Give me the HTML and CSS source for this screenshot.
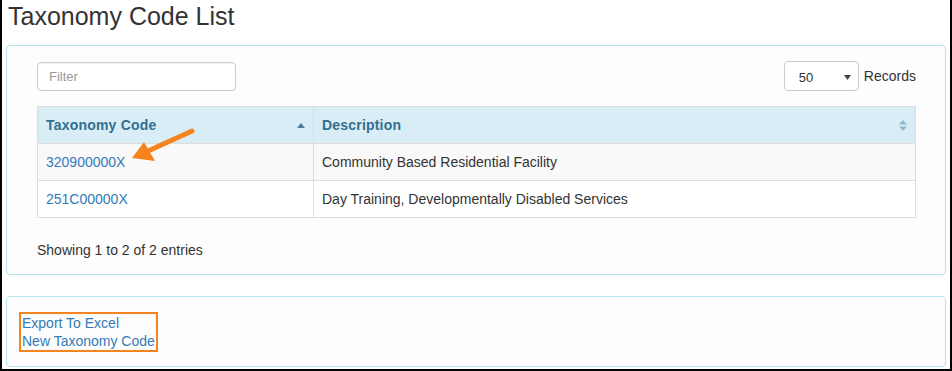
FILE: index.html
```html
<!DOCTYPE html>
<html lang="en">
<head>
  <meta charset="UTF-8" />
  <title>Taxonomy Code List</title>
  <link rel="stylesheet" href="styles.css">
</head>
<body>
  <div class="page">
    <h1>Taxonomy Code List</h1>

    <section class="panel">
      <div class="toolbar">
        <input class="filter" type="text" placeholder="Filter" />
        <div class="records">
          <div class="select">
            <span>50</span>
            <svg class="caret" width="7" height="5" viewBox="0 0 7 5"><path d="M0 0H7L3.5 5Z" fill="#444"/></svg>
          </div>
          <span>Records</span>
        </div>
      </div>

      <table class="grid">
        <thead>
          <tr>
            <th class="col-code">
              <div class="th-inner">Taxonomy Code
                <svg width="8" height="5" viewBox="0 0 8 5"><path d="M0 5L4 0L8 5Z" fill="#4f7d9b"/></svg>
              </div>
            </th>
            <th>
              <div class="th-inner">Description
                <svg width="8" height="11" viewBox="0 0 8 11"><path d="M0 4.5L4 0L8 4.5Z M0 6.5H8L4 11Z" fill="#93b6cc"/></svg>
              </div>
            </th>
          </tr>
        </thead>
        <tbody>
          <tr class="odd">
            <td><a href="#">320900000X</a></td>
            <td>Community Based Residential Facility</td>
          </tr>
          <tr>
            <td><a href="#">251C00000X</a></td>
            <td>Day Training, Developmentally Disabled Services</td>
          </tr>
        </tbody>
      </table>

      <p class="info">Showing 1 to 2 of 2 entries</p>
    </section>

    <section class="panel actions">
      <div class="highlight">
        <a href="#">Export To Excel</a>
        <a href="#">New Taxonomy Code</a>
      </div>
    </section>

    <svg class="arrow" width="80" height="45" viewBox="120 120 80 45">
      <path d="M190 131L146 151" stroke="#f5841f" stroke-width="5" stroke-linecap="round" fill="none"/>
      <path d="M130 158L142 142L153 161Z" fill="#f5841f"/>
    </svg>
  </div>
</body>
</html>
```

FILE: styles.css
```css
html, body {
  margin: 0;
}
body {
  height: 371px;
  box-sizing: border-box;
  border: 2px solid #000;
  border-top: 0;
  background: #fff;
  font-family: 'Liberation Sans', Arial, sans-serif;
  font-size: 14px;
  color: #333;
  overflow: hidden;
}
a {
  color: #337ab7;
  text-decoration: none;
}
.page {
  position: relative;
  padding: 0 4px;
}
h1 {
  margin: 0 0 14px;
  padding: 1px 0 0 2px;
  font-size: 25px;
  font-weight: normal;
  line-height: 30px;
  color: #333;
}
.panel {
  border: 1px solid #b4e4ee;
  border-radius: 4px;
  background: #fdfdfd;
  padding: 15px 29px 14px 30px;
}
.toolbar {
  display: flex;
  justify-content: space-between;
  align-items: center;
  height: 30px;
}
.filter {
  width: 199px;
  height: 29px;
  box-sizing: border-box;
  border: 1px solid #ccc;
  border-radius: 4px;
  padding: 0 11px;
  font-family: inherit;
  font-size: 13px;
  color: #555;
  box-shadow: inset 0 1px 1px rgba(0, 0, 0, 0.05);
}
.filter::placeholder {
  color: #999;
}
.records {
  display: flex;
  align-items: center;
  gap: 5px;
  font-size: 14px;
}
.select {
  display: flex;
  align-items: center;
  justify-content: space-between;
  width: 75px;
  height: 30px;
  box-sizing: border-box;
  border: 1px solid #ccc;
  border-radius: 4px;
  background: #fff;
  padding: 2px 7px 0 14px;
  font-size: 13px;
  color: #333;
}
.grid {
  width: 100%;
  margin-top: 15px;
  border-collapse: collapse;
  border: 1px solid #ddd;
  background: #fff;
}
.grid th,
.grid td {
  border: 1px solid #ddd;
  padding: 8px;
  line-height: 20px;
  text-align: left;
}
.grid th {
  background: #d9edf7;
  color: #31708f;
  font-weight: bold;
  letter-spacing: 0.2px;
  padding-top: 8px;
  padding-bottom: 8px;
}
.col-code {
  width: 259px;
}
.th-inner {
  display: flex;
  justify-content: space-between;
  align-items: center;
}
.grid td {
  padding-top: 8px;
  padding-bottom: 8px;
}
.grid tr.odd td {
  background: #f9f9f9;
}
.info {
  margin: 22px 0 0;
  line-height: 20px;
}
.actions {
  margin-top: 21px;
  padding: 15px 12px 14px;
}
.highlight {
  display: inline-block;
  border: 2px solid #f5841f;
  padding: 0 1px;
}
.highlight a {
  display: block;
  line-height: 18px;
}
.arrow {
  position: absolute;
  left: 120px;
  top: 120px;
}
```
